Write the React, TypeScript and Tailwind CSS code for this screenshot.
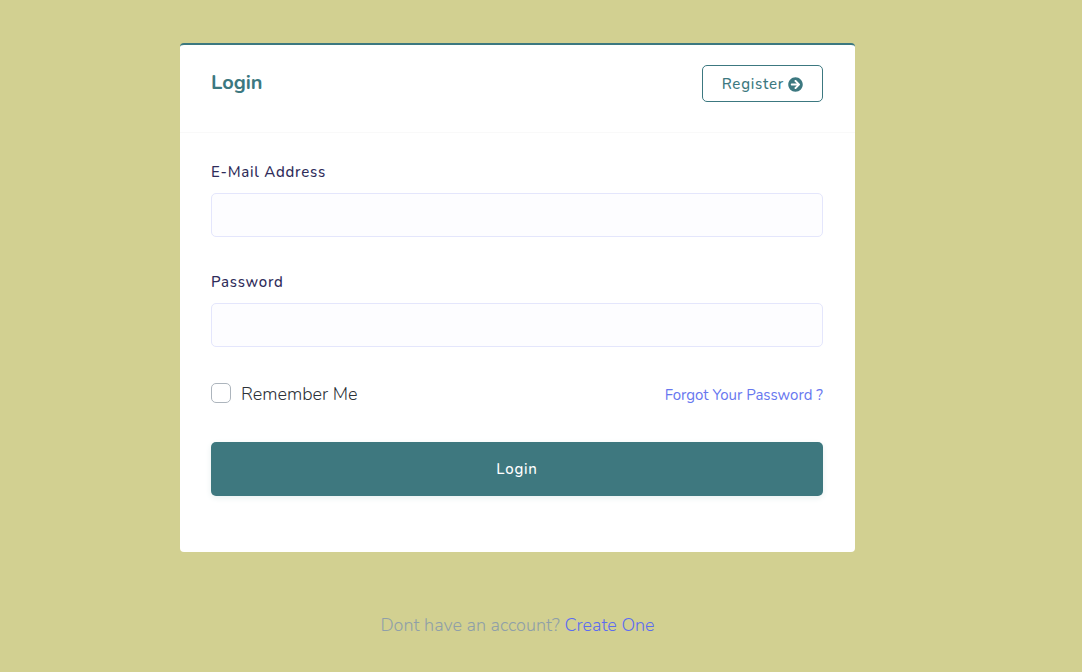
import { FaArrowCircleRight } from "react-icons/fa";

const label = "block text-[15px] leading-6 font-medium tracking-wider text-[#2f2c5a]";
const field =
  "mt-[9px] block h-11 w-full rounded-[5px] border border-[#e4e6fc] bg-[#fdfdff] px-4 text-sm outline-none focus:border-[#3c7880]";

export default function App() {
  return (
    <div className="min-h-screen bg-[#d2d091] px-[180px] pt-[43px] pb-4 font-['Nunito','Open_Sans',sans-serif]">
      <main className="w-full max-w-[675px]">
        <section className="rounded border-t-2 border-[#3c7880] bg-white">
          <header className="flex h-[88px] items-start justify-between border-b border-[#f9f9f9] pt-5 pr-8 pl-[31px]">
            <h4 className="text-xl leading-9 font-bold text-[#3c7880]">Login</h4>
            <a href="#register" className="flex items-center gap-1 rounded-[5px] border border-[#3c7880] px-[19px] pt-1.5 pb-[5px] text-[15px] leading-6 font-medium tracking-wider text-[#3c7880]">
              Register <FaArrowCircleRight />
            </a>
          </header>
          <form className="pt-[27px] pr-8 pb-14 pl-[31px]">
            <label htmlFor="email" className={label}>E-Mail Address</label>
            <input id="email" type="email" className={field} />
            <label htmlFor="password" className={label + " mt-[33px]"}>Password</label>
            <input id="password" type="password" className={field} />
            <div className="mt-9 flex h-6 items-start justify-between">
              <label className="flex items-start gap-2.5 text-lg leading-[22px] font-light text-[#2c3138]">
                <input type="checkbox" className="size-5 appearance-none rounded-[5px] border border-[#adb5bd] bg-white checked:bg-[#3c7880]" />
                Remember Me
              </label>
              <a href="#forgot" className="text-[15px] leading-6 text-[#6777ef]">Forgot Your Password ?</a>
            </div>
            <button type="submit" className="mt-[35px] h-[54px] w-full rounded-[5px] bg-[#3e787f] text-[15px] font-medium tracking-wider text-white shadow-[0_2px_6px_#e8f0f0]">Login</button>
          </form>
        </section>
        <p className="mt-[59px] text-center text-lg leading-7 font-light text-[#8f9fa8]">
          Dont have an account? <a href="#register" className="text-[#5c6cf0]">Create One</a>
        </p>
      </main>
    </div>
  );
}
